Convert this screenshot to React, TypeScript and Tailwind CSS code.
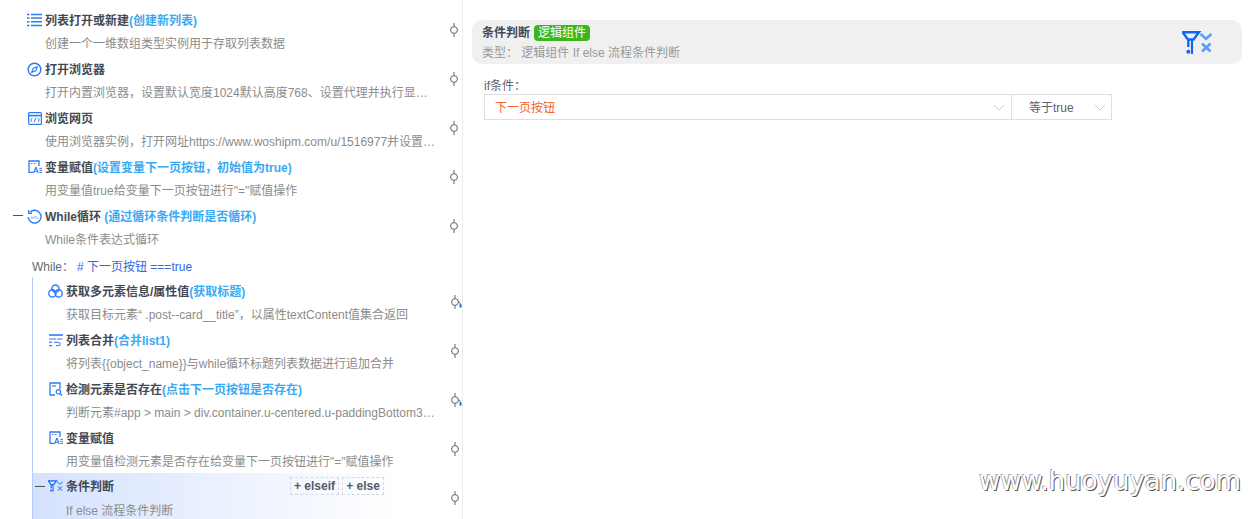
import type { ReactNode } from 'react';

const font = 'font-["Liberation_Sans","Noto_Sans_CJK_SC",sans-serif]';

function ListIcon() {
  return (
    <svg width="15" height="14" viewBox="0 0 15 14" className="text-[#2f7bf5]">
      <path d="M0 1.500h2.500M4 1.500h11M0 5h2.500M4 5h11M0 8.700h2.500M4 8.700h11M0 12.400h2.500M4 12.400h11" stroke="currentColor" strokeWidth="1.500" />
    </svg>
  );
}

function CompassIcon() {
  return (
    <svg width="15" height="15" viewBox="0 0 15 15" fill="none" stroke="#2f7bf5">
      <circle cx="7.500" cy="7.500" r="6.300" strokeWidth="1.500" />
      <path d="M10.300 4.700 8.800 8.800 4.700 10.300 6.200 6.200Z" strokeWidth="1.100" />
    </svg>
  );
}

function BrowserIcon() {
  return (
    <svg width="14" height="13" viewBox="0 0 14 13" fill="none" stroke="#2f7bf5">
      <rect x="0.600" y="0.600" width="12.800" height="11.800" rx="1" strokeWidth="1.200" />
      <path d="M1 3.600h12" strokeWidth="1.600" />
      <path d="M4.200 6 2.600 8l1.600 2M9.800 6l1.600 2-1.600 2M7.800 5.800 6.200 10.200" strokeWidth="1" />
    </svg>
  );
}

function VariableIcon() {
  return (
    <svg width="14" height="14" viewBox="0 0 14 14" fill="none" stroke="#2f7bf5">
      <path d="M5.500 12.400H1V1h10v5" strokeWidth="1.300" />
      <path d="M3 3.500h1.500M6 3.500h1.500" strokeWidth="1" />
      <path d="M5.600 13 7.600 7.500h.6l2 5.500M6.400 11.200h3" strokeWidth="1.100" />
      <path d="M11.400 8.400H14M11.400 10.400H14M11.400 12.400H14" strokeWidth="1" />
    </svg>
  );
}

function WhileIcon() {
  return (
    <svg width="15" height="15" viewBox="0 0 15 15" fill="none">
      <path d="M3 3.200A6.400 6.400 0 1 1 1.200 8" stroke="#2f7bf5" strokeWidth="1.400" />
      <path d="M1.600 1v3.400H5" stroke="#2f7bf5" strokeWidth="1.200" />
      <path d="M4.200 7 5 10l1-2.400L7 10l.8-3M9 6.600V10M9 8.200h1.700V10" stroke="#9cc0f7" strokeWidth="0.800" />
    </svg>
  );
}

function RingsIcon() {
  return (
    <svg width="15" height="14" viewBox="0 0 15 14" fill="none" stroke="#2f7bf5" strokeWidth="1.400">
      <circle cx="7.500" cy="4.600" r="3.600" />
      <circle cx="4.400" cy="9.400" r="3.600" />
      <circle cx="10.600" cy="9.400" r="3.600" />
    </svg>
  );
}

function MergeIcon() {
  return (
    <svg width="14" height="13" viewBox="0 0 14 13" fill="none" stroke="#2f7bf5">
      <path d="M0 1h14" strokeWidth="1.600" />
      <path d="M0 5h7M0 8.200h3M0 11.600h3" strokeWidth="1.200" />
      <path d="M13.500 5H8M5 8.400h5M7 11.600h3.200a1.700 1.700 0 0 0 0-3.200" strokeWidth="1" />
    </svg>
  );
}

function DetectIcon() {
  return (
    <svg width="14" height="14" viewBox="0 0 14 14" fill="none" stroke="#2f7bf5">
      <path d="M6 13H1V1h10v6" strokeWidth="1.300" />
      <path d="M3 4h4" strokeWidth="1.200" />
      <circle cx="9.400" cy="9.800" r="2.200" strokeWidth="1.200" />
      <path d="m11 11.500 2 2" strokeWidth="1.300" />
    </svg>
  );
}

function FilterIcon({ className }: { className?: string }) {
  return (
    <svg viewBox="0 0 30 23" className={className} fill="none">
      <path d="M.5 1.300h16.500L11.500 8.500H6Z" stroke="#1268f3" strokeWidth="2.400" />
      <path d="M10 8v15" stroke="#1268f3" strokeWidth="2.200" />
      <path d="M6.300 8v8" stroke="#1268f3" strokeWidth="2.400" />
      <circle cx="6.300" cy="20.700" r="2" fill="#1268f3" />
      <path d="m18.500 3 5.500 4.800L29.500 3" stroke="#5c9bf8" strokeWidth="2.600" />
      <path d="m20 12.500 8.500 8M28.500 12.500l-8.500 8" stroke="#5c9bf8" strokeWidth="2.600" />
    </svg>
  );
}

function Node({ branch }: { branch?: boolean }) {
  return (
    <svg width="10" height="16" viewBox="0 0 10 16" fill="none" className="overflow-visible">
      <path d="M5 1v3.500M5 11.500V15" stroke="#5d6270" strokeWidth="1" />
      <circle cx="5" cy="8" r="3.400" stroke="#5d6270" strokeWidth="1" />
      {branch && <path d="M8 8c2 0 2.500 1 2.500 3" stroke="#5d6270" strokeWidth="1" />}
      {branch && <rect x="9.500" y="10.500" width="2" height="3" fill="#1268f3" />}
    </svg>
  );
}

type RowProps = {
  icon: ReactNode;
  title: string;
  note?: string;
  desc: string;
  nested?: boolean;
  branch?: boolean;
  collapse?: boolean;
  active?: boolean;
  actions?: boolean;
  gapNote?: boolean;
};

function Row({ icon, title, note, desc, nested, branch, collapse, active, actions, gapNote }: RowProps) {
  return (
    <div
      className={`relative flex h-[49px] pr-[3px] ${nested ? 'pl-[15px]' : 'pl-[27px]'} ${
        active ? 'bg-gradient-to-r from-[#d5e2fd] to-[#ffffff] to-[85%]' : ''
      }`}
    >
      {collapse && (
        <span className={`absolute top-[13px] h-px w-[10px] bg-[#555] ${nested ? 'left-[2px]' : 'left-[13px]'}`} />
      )}
      <div className="min-w-0 flex-1">
        <div className={`flex items-center gap-[3px] ${active ? 'h-[26px]' : 'h-[28px]'}`}>
          <span className="flex w-[15px] shrink-0 justify-center">{icon}</span>
          <span className="whitespace-nowrap pt-[2px] text-[12px] font-bold text-[#444853]">
            {title}
            {note && (
              <span className="text-[#3aa9f5]">
                {gapNote ? ' ' : ''}
                {note}
              </span>
            )}
          </span>
          {actions && (
            <span className="ml-[173px] flex gap-[3px]">
              <span className="flex h-[18px] w-[49px] items-center justify-center border border-dashed border-[#d5d8e0] text-[12px] font-bold text-[#555a66]">
                + elseif
              </span>
              <span className="flex h-[18px] w-[42px] items-center justify-center border border-dashed border-[#d5d8e0] text-[12px] font-bold text-[#555a66]">
                + else
              </span>
            </span>
          )}
        </div>
        <p
          className={`ml-[18px] truncate text-[12px] leading-[20px] text-[#8c8c8c] ${nested ? 'w-[369px]' : 'w-[391px]'} ${
            active ? 'mt-[2px]' : 'mt-0'
          }`}
        >
          {desc}
        </p>
      </div>
      <div className={`flex w-[10px] shrink-0 items-start ${nested ? 'translate-x-px pt-[17px]' : 'pt-[16px]'}`}>
        <Node branch={branch} />
      </div>
    </div>
  );
}

export default function App() {
  return (
    <div className={`relative flex h-[519px] w-[1252px] overflow-hidden bg-white ${font}`}>
      <div className="h-full w-[463px] shrink-0 overflow-hidden border-r border-[#ececec] pt-[6px]">
        <Row
          icon={<ListIcon />}
          title="列表打开或新建"
          note="(创建新列表)"
          desc="创建一个一维数组类型实例用于存取列表数据"
        />
        <Row icon={<CompassIcon />} title="打开浏览器" desc="打开内置浏览器，设置默认宽度1024默认高度768、设置代理并执行显示浏览器窗口操作" />
        <Row icon={<BrowserIcon />} title="浏览网页" desc="使用浏览器实例，打开网址https://www.woshipm.com/u/1516977并设置超时时间" />
        <Row
          icon={<VariableIcon />}
          title="变量赋值"
          note="(设置变量下一页按钮，初始值为true)"
          desc={'用变量值true给变量下一页按钮进行"="赋值操作'}
        />
        <Row
          icon={<WhileIcon />}
          title="While循环"
          note="(通过循环条件判断是否循环)"
          gapNote
          collapse
          desc="While条件表达式循环"
        />
        <div className="flex h-[26px] items-start pl-[32px] pt-[6px] text-[12px] leading-[20px] text-[#666b75]">
          While：
          <span className="ml-[3px] text-[#3267e8]"># 下一页按钮 ===true</span>
        </div>
        <div className="ml-[32px] border-l border-[#b6cdfb]">
          <Row
            nested
            branch
            icon={<RingsIcon />}
            title="获取多元素信息/属性值"
            note="(获取标题)"
            desc="获取目标元素“ .post--card__title”，以属性textContent值集合返回"
          />
          <Row
            nested
            icon={<MergeIcon />}
            title="列表合并"
            note="(合并list1)"
            desc="将列表{{object_name}}与while循环标题列表数据进行追加合并"
          />
          <Row
            nested
            branch
            icon={<DetectIcon />}
            title="检测元素是否存在"
            note="(点击下一页按钮是否存在)"
            desc="判断元素#app > main > div.container.u-centered.u-paddingBottom30是否存在"
          />
          <Row
            nested
            icon={<VariableIcon />}
            title="变量赋值"
            desc={'用变量值检测元素是否存在给变量下一页按钮进行"="赋值操作'}
          />
          <Row
            nested
            active
            collapse
            actions
            icon={<FilterIcon className="h-[12px] w-[15px]" />}
            title="条件判断"
            desc="If else 流程条件判断"
          />
        </div>
      </div>

      <div className="flex-1 pl-[9px] pr-[10px] pt-[20px]">
        <div className="flex h-[44px] items-center justify-between rounded-[10px] bg-[#f0f0f1] pl-[10px] pr-[30px]">
          <div>
            <div className="flex h-[22px] items-center gap-[4px]">
              <span className="text-[12px] font-bold text-[#444853]">条件判断</span>
              <span className="rounded-[4px] bg-[#3db61e] px-[4px] text-[12px] leading-[16px] text-white">逻辑组件</span>
            </div>
            <div className="text-[12px] leading-[18px] text-[#999]">类型：&nbsp;逻辑组件 If else 流程条件判断</div>
          </div>
          <FilterIcon className="h-[23px] w-[30px]" />
        </div>
        <div className="ml-[12px] mt-[14px] text-[12px] leading-[16px] text-[#5d6270]">if条件：</div>
        <div className="ml-[12px] flex h-[26px] w-[628px] border border-[#dcdfe6] text-[12px]">
          <div className="flex w-[527px] items-center justify-between border-r border-[#dcdfe6] pl-[10px] pr-[6px] text-[#f0642d]">
            <span className="pt-px">下一页按钮</span>
            <Chevron />
          </div>
          <div className="flex flex-1 items-center justify-between pl-[17px] pr-[5px] text-[#5d6270]">
            <span className="pt-px">等于true</span>
            <Chevron />
          </div>
        </div>
      </div>

      <div className='absolute left-[979px] top-[465px] font-["DejaVu_Sans",sans-serif] text-[26px] leading-[32px] text-white [text-shadow:-1px_-1px_0_#aaa,1px_1px_0_#555]'>
        www.huoyuyan.com
      </div>
    </div>
  );
}

function Chevron() {
  return (
    <svg width="12" height="7" viewBox="0 0 12 7" fill="none" stroke="#c8ccd4" strokeWidth="1">
      <path d="m1 1 5 5 5-5" />
    </svg>
  );
}
